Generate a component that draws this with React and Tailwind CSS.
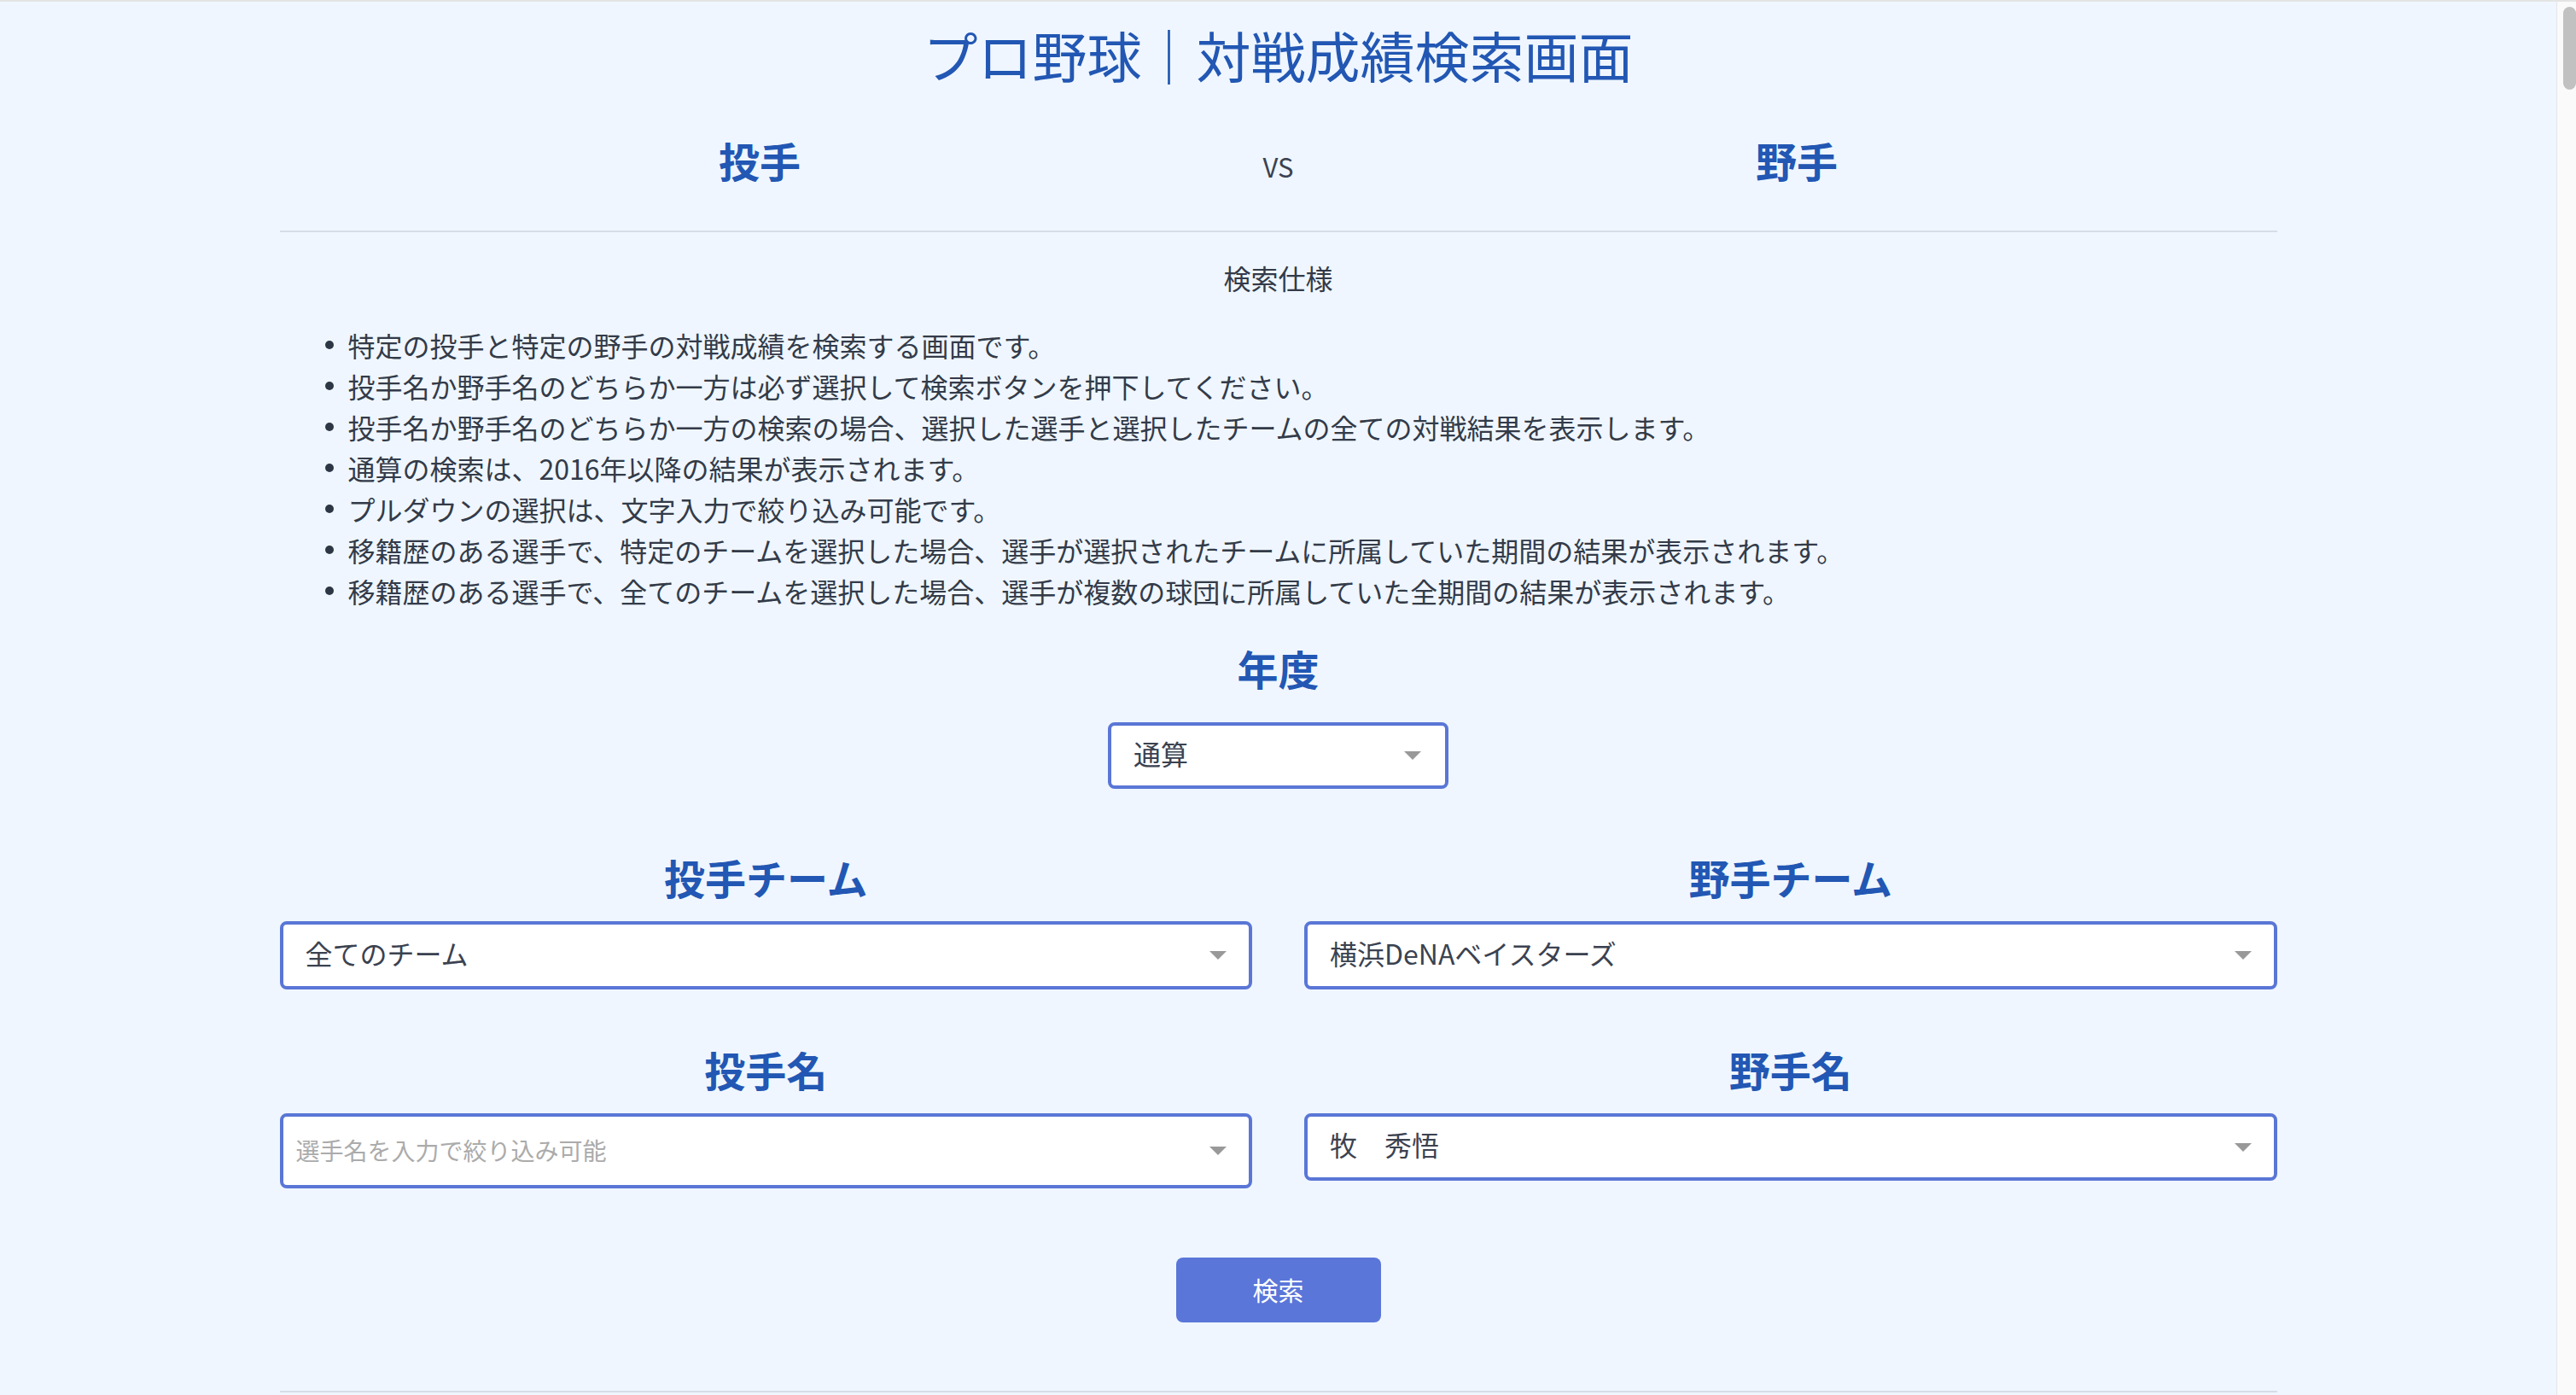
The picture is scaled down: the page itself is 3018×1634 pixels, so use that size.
import React from "react";

const bullets = [
  "特定の投手と特定の野手の対戦成績を検索する画面です。",
  "投手名か野手名のどちらか一方は必ず選択して検索ボタンを押下してください。",
  "投手名か野手名のどちらか一方の検索の場合、選択した選手と選択したチームの全ての対戦結果を表示します。",
  "通算の検索は、2016年以降の結果が表示されます。",
  "プルダウンの選択は、文字入力で絞り込み可能です。",
  "移籍歴のある選手で、特定のチームを選択した場合、選手が選択されたチームに所属していた期間の結果が表示されます。",
  "移籍歴のある選手で、全てのチームを選択した場合、選手が複数の球団に所属していた全期間の結果が表示されます。",
];

function Arrow() {
  return (
    <svg width="20" height="10" viewBox="0 0 20 10" className="shrink-0">
      <path d="M0 0 L20 0 L10 10 Z" fill="#999999" />
    </svg>
  );
}

function SelectBox({ children, placeholder, tall }) {
  return (
    <div
      className={
        "flex w-full items-center justify-between rounded-[8px] border-[4px] border-[#5a76d6] bg-white pr-[26px] " +
        (tall ? "h-[88px] pl-[15px]" : "h-[80px] pl-[26px]")
      }
    >
      {placeholder ? (
        <span className="pb-[2px] text-[28px] leading-none text-[#ababab]">{placeholder}</span>
      ) : (
        <span className="pb-[7px] text-[32px] leading-none text-[#3b4250]">{children}</span>
      )}
      <Arrow />
    </div>
  );
}

function Label({ children }) {
  return (
    <div className="text-center text-[48px] font-bold leading-[60px] text-[#2257b3]">{children}</div>
  );
}

export default function App() {
  return (
    <div className="flex h-[1634px] w-[3018px] overflow-hidden border-t-2 border-[#e4e4e4] font-['Noto_Sans_CJK_JP','Noto_Sans',sans-serif]">
      <div className="flex-1 bg-[#eff6ff]">
        <div className="mx-auto w-[2340px]">
          <h1 className="pt-[21px] text-center text-[64px] font-normal leading-[80px] text-[#2257b3]">
            プロ野球｜対戦成績検索画面
          </h1>

          <div className="mt-[54px] grid grid-cols-[1fr_90px_1fr] items-baseline">
            <div className="text-center text-[48px] font-bold leading-[60px] text-[#2257b3]">投手</div>
            <div className="text-center text-[31px] leading-[60px] text-[#3b4250]">VS</div>
            <div className="text-center text-[48px] font-bold leading-[60px] text-[#2257b3]">野手</div>
          </div>

          <div className="mt-[45px] h-[2px] bg-[#d6dde6]" />

          <div className="mt-[29px] text-center text-[32px] leading-[48px] text-[#333b48]">検索仕様</div>

          <ul className="mt-[31px] pl-[53px]">
            {bullets.map((b) => (
              <li key={b} className="flex items-center gap-[17px] text-[32px] leading-[48px] text-[#333b48]">
                <span className="h-[10px] w-[10px] shrink-0 rounded-full bg-[#2d3644]" />
                <span>{b}</span>
              </li>
            ))}
          </ul>

          <div className="mt-[36px]">
            <Label>年度</Label>
          </div>
          <div className="mx-auto mt-[34px] flex h-[78px] w-[399px] items-center justify-between rounded-[8px] border-[4px] border-[#5a76d6] bg-white pl-[26px] pr-[28px]">
            <span className="pb-[7px] text-[32px] leading-none text-[#3b4250]">通算</span>
            <Arrow />
          </div>

          <div className="mt-[73px] grid grid-cols-2 gap-x-[61px]">
            <div>
              <Label>投手チーム</Label>
              <div className="mt-[22px]">
                <SelectBox>全てのチーム</SelectBox>
              </div>
            </div>
            <div>
              <Label>野手チーム</Label>
              <div className="mt-[22px]">
                <SelectBox>横浜DeNAベイスターズ</SelectBox>
              </div>
            </div>
          </div>

          <div className="mt-[63px] grid grid-cols-2 items-start gap-x-[61px]">
            <div>
              <Label>投手名</Label>
              <div className="mt-[22px]">
                <SelectBox tall placeholder="選手名を入力で絞り込み可能" />
              </div>
            </div>
            <div>
              <Label>野手名</Label>
              <div className="mt-[22px]">
                <div className="flex h-[79px] w-full items-center justify-between rounded-[8px] border-[4px] border-[#5a76d6] bg-white pl-[26px] pr-[26px]">
                  <span className="pb-[7px] text-[32px] leading-none text-[#3b4250]">牧　秀悟</span>
                  <Arrow />
                </div>
              </div>
            </div>
          </div>

          <div className="mt-[81px] flex justify-center">
            <button className="flex h-[76px] w-[240px] items-center justify-center rounded-[8px] bg-[#5a76d9] pb-[2px] text-[30px] text-white">
              検索
            </button>
          </div>

          <div className="mt-[80px] h-[2px] bg-[#d6dde6]" />
        </div>
      </div>
      <div className="flex w-[23px] flex-col items-center border-l border-[#e6e6e6] bg-[#fafafa] pt-[6px]">
        <div className="ml-[6px] h-[97px] w-[15px] rounded-full bg-[#c1c1c1]" />
      </div>
    </div>
  );
}
